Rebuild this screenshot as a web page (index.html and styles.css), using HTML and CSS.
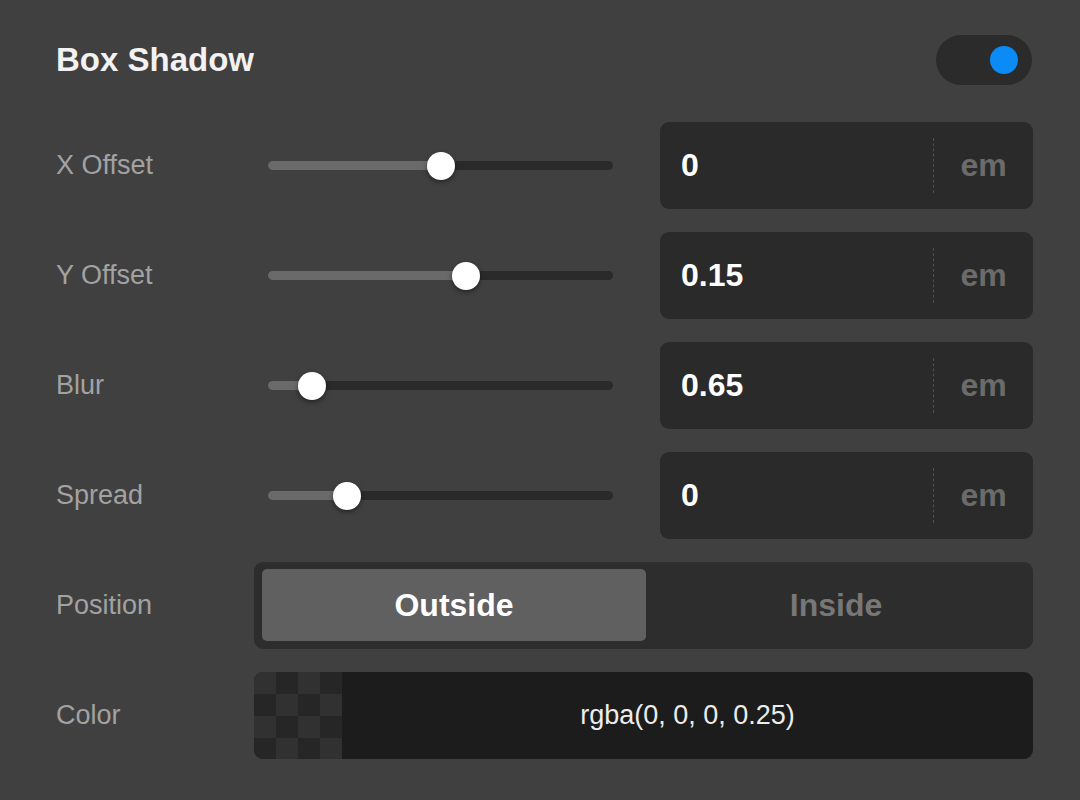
FILE: index.html
```html
<!DOCTYPE html>
<html>
<head>
<meta charset="utf-8">
<link rel="stylesheet" href="styles.css">
</head>
<body>
<div class="panel">
  <div class="header">
    <div class="title">Box Shadow</div>
    <div class="toggle"><span class="knob"></span></div>
  </div>
  <div class="rows">
    <div class="row">
      <div class="label">X Offset</div>
      <div class="control">
        <div class="slider"><div class="track"><div class="fill" style="width:50%"></div><div class="thumb" style="left:50%"></div></div></div>
        <div class="field"><span class="value">0</span><span class="unit">em</span></div>
      </div>
    </div>
    <div class="row">
      <div class="label">Y Offset</div>
      <div class="control">
        <div class="slider"><div class="track"><div class="fill" style="width:57.4%"></div><div class="thumb" style="left:57.4%"></div></div></div>
        <div class="field"><span class="value">0.15</span><span class="unit">em</span></div>
      </div>
    </div>
    <div class="row">
      <div class="label">Blur</div>
      <div class="control">
        <div class="slider"><div class="track"><div class="fill" style="width:12.8%"></div><div class="thumb" style="left:12.8%"></div></div></div>
        <div class="field"><span class="value">0.65</span><span class="unit">em</span></div>
      </div>
    </div>
    <div class="row">
      <div class="label">Spread</div>
      <div class="control">
        <div class="slider"><div class="track"><div class="fill" style="width:22.9%"></div><div class="thumb" style="left:22.9%"></div></div></div>
        <div class="field"><span class="value">0</span><span class="unit">em</span></div>
      </div>
    </div>
    <div class="row">
      <div class="label">Position</div>
      <div class="segmented">
        <div class="seg active">Outside</div>
        <div class="seg">Inside</div>
      </div>
    </div>
    <div class="row">
      <div class="label">Color</div>
      <div class="color">
        <div class="checker"></div>
        <div class="color-text">rgba(0, 0, 0, 0.25)</div>
      </div>
    </div>
  </div>
</div>
</body>
</html>
```
FILE: styles.css
```css
html, body {
  margin: 0;
  padding: 0;
  background: #404040;
  font-family: "Liberation Sans", Arial, sans-serif;
}
.panel {
  width: 1080px;
  height: 800px;
  box-sizing: border-box;
  padding: 35px 47px 0 56px;
}
.header {
  display: flex;
  align-items: center;
  justify-content: space-between;
  height: 50px;
  margin-bottom: 37px;
}
.title {
  color: #f2f2f2;
  font-size: 33px;
  font-weight: bold;
}
.toggle {
  width: 96px;
  height: 50px;
  margin-right: 1px;
  border-radius: 25px;
  background: #2b2b2b;
  display: flex;
  align-items: center;
  justify-content: flex-end;
  padding-right: 14px;
  box-sizing: border-box;
}
.knob {
  width: 28px;
  height: 28px;
  border-radius: 50%;
  background: #0b8bf5;
}
.rows {
  display: flex;
  flex-direction: column;
  gap: 23px;
}
.row {
  display: flex;
  align-items: center;
  height: 87px;
}
.label {
  width: 198px;
  flex: none;
  color: #a2a2a2;
  font-size: 27px;
}
.control {
  flex: 1;
  display: flex;
  align-items: center;
  height: 100%;
}
.slider {
  flex: 1;
  padding: 0 14px;
  margin-right: 33px;
}
.track {
  position: relative;
  height: 9px;
  border-radius: 5px;
  background: #2a2a2a;
}
.fill {
  height: 100%;
  border-radius: 5px 0 0 5px;
  background: #6a6a6a;
}
.thumb {
  position: absolute;
  top: 50%;
  width: 28px;
  height: 28px;
  margin: -14px 0 0 -14px;
  border-radius: 50%;
  background: #ffffff;
  box-shadow: 0 2px 5px rgba(0, 0, 0, 0.45);
}
.field {
  width: 373px;
  height: 87px;
  flex: none;
  box-sizing: border-box;
  background: #2a2a2a;
  border-radius: 9px;
  display: flex;
  align-items: center;
}
.value {
  flex: 1;
  padding-left: 21px;
  color: #ffffff;
  font-size: 32px;
  font-weight: bold;
}
.unit {
  width: 100px;
  height: 55px;
  box-sizing: border-box;
  border-left: 1px dashed #505050;
  display: flex;
  align-items: center;
  justify-content: center;
  color: #6b6b6b;
  font-size: 32px;
  font-weight: bold;
}
.segmented {
  flex: 1;
  height: 87px;
  box-sizing: border-box;
  padding: 7px 7px 8px 8px;
  background: #2d2d2d;
  border-radius: 9px;
  display: flex;
}
.seg {
  flex: 1;
  display: flex;
  align-items: center;
  justify-content: center;
  border-radius: 5px;
  color: #777777;
  font-size: 32px;
  font-weight: bold;
}
.seg.active {
  flex: none;
  width: 384px;
  background: #606060;
  color: #ffffff;
}
.color {
  flex: 1;
  height: 87px;
  background: #1c1c1c;
  border-radius: 9px;
  overflow: hidden;
  display: flex;
}
.checker {
  width: 88px;
  flex: none;
  background: repeating-conic-gradient(#262626 0 25%, #313131 0 50%) 0 0 / 44px 44px;
}
.color-text {
  flex: 1;
  display: flex;
  align-items: center;
  justify-content: center;
  color: #ececec;
  font-size: 27px;
}
```
